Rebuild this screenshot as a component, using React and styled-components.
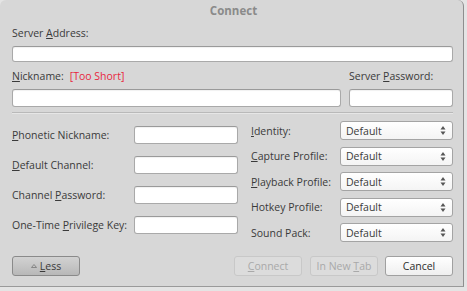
import React from 'react';
import styled, { createGlobalStyle } from 'styled-components';

const GlobalStyle = createGlobalStyle`
  body {
    margin: 0;
    background: #e4e4e4;
    font-family: "Open Sans", "DejaVu Sans", sans-serif;
  }
`;

const Window = styled.div`
  width: 463px;
  height: 286px;
  background: #d7d7d7;
  border-right: 1px solid #8e8e8e;
  border-bottom: 1px solid #9a9a9a;
  border-radius: 6px 6px 0 0;
  display: flex;
  flex-direction: column;
  color: #3a3a3a;
  font-size: 10.5px;
`;

const TitleBar = styled.div`
  height: 20px;
  display: flex;
  align-items: center;
  justify-content: center;
  font-weight: bold;
  font-size: 11.5px;
  color: #8a8a8a;
  padding-left: 4px;
`;

const Body = styled.div`
  flex: 1;
  padding: 6px 10px 0 12px;
  display: flex;
  flex-direction: column;
`;

const Label = styled.div`
  height: 14px;
  line-height: 14px;
  white-space: nowrap;
  color: ${p => (p.$error ? '#e8273f' : '#3a3a3a')};
  margin-left: ${p => p.$indent || 0}px;
`;

const Key = styled.u`
  text-decoration: underline;
  text-underline-offset: 1px;
`;

const TextInput = styled.div`
  box-sizing: border-box;
  height: ${p => p.$h || 18}px;
  width: ${p => (p.$w ? p.$w + 'px' : '100%')};
  flex: none;
  margin-top: ${p => p.$mt || 0}px;
  background: #fff;
  border: 1px solid #a9a9a9;
  border-top-color: #9a9a9a;
  border-radius: 3px;
  box-shadow: inset 0 1px 1px rgba(0, 0, 0, 0.06);
`;

const NickRow = styled.div`
  display: flex;
  margin-top: 7px;
`;

const NickCol = styled.div`
  display: flex;
  flex-direction: column;
  gap: 6px;
  flex: ${p => (p.$grow ? 1 : 'none')};
  width: ${p => (p.$w ? p.$w + 'px' : 'auto')};
  margin-left: ${p => p.$ml || 0}px;
`;

const LabelLine = styled.div`
  display: flex;
  height: 14px;
  line-height: 14px;
`;

const Separator = styled.div`
  height: 1px;
  background: #b9b9b9;
  border-bottom: 1px solid #e6e6e6;
  margin-top: 5px;
`;

const Columns = styled.div`
  display: flex;
  margin-top: 7px;
  height: 122px;
`;

const LeftCol = styled.div`
  width: 226px;
  display: flex;
  flex-direction: column;
  padding-top: 5px;
  gap: 12px;
`;

const RightCol = styled.div`
  flex: 1;
  margin-left: 13px;
  display: flex;
  flex-direction: column;
  gap: 6.5px;
`;

const FieldRow = styled.div`
  display: flex;
  align-items: center;
  height: ${p => p.$h}px;
`;

const FieldLabel = styled.div`
  width: ${p => p.$w}px;
  flex: none;
  white-space: nowrap;
`;

const Combo = styled.div`
  box-sizing: border-box;
  width: 113px;
  height: 19px;
  background: linear-gradient(#ffffff, #f4f4f4);
  border: 1px solid #a4a4a4;
  border-radius: 3px;
  display: flex;
  align-items: center;
  justify-content: space-between;
  padding: 0 6px 0 5px;
`;

const Arrows = styled.svg`
  width: 6px;
  height: 11px;
`;

const ButtonRow = styled.div`
  display: flex;
  align-items: center;
  margin-top: 13px;
  height: 20px;
`;

const Button = styled.div`
  box-sizing: border-box;
  width: 68px;
  height: 20px;
  border-radius: 3px;
  display: flex;
  align-items: center;
  justify-content: center;
  gap: 3px;
  margin-left: ${p => p.$ml || 0}px;
  ${p =>
    p.$variant === 'less' &&
    `
    background: linear-gradient(#d2d2d2, #b8b8b8);
    border: 1px solid #8a8a8a;
    color: #3a3a3a;
  `}
  ${p =>
    p.$variant === 'disabled' &&
    `
    background: #dcdcdc;
    border: 1px solid #c8c8c8;
    color: #a9a9a9;
  `}
  ${p =>
    p.$variant === 'normal' &&
    `
    background: linear-gradient(#ffffff, #efefef);
    border: 1px solid #a0a0a0;
    color: #2e2e2e;
  `}
`;

const Spacer = styled.div`
  flex: 1;
`;

const UpDown = () => (
  <Arrows viewBox="0 0 6 11">
    <path d="M3 1 L5.5 4.5 L0.5 4.5 Z" fill="#555" />
    <path d="M3 10 L5.5 6.5 L0.5 6.5 Z" fill="#555" />
  </Arrows>
);

const leftFields = [
  <><Key>P</Key>honetic Nickname:</>,
  <><Key>D</Key>efault Channel:</>,
  <>Channel <Key>P</Key>assword:</>,
  <>One-Time <Key>P</Key>rivilege Key:</>,
];

const rightFields = [
  <><Key>I</Key>dentity:</>,
  <><Key>C</Key>apture Profile:</>,
  <><Key>P</Key>layback Profile:</>,
  <>Hotkey Profile:</>,
  <>Sound Pack:</>,
];

export default function App() {
  return (
    <>
      <GlobalStyle />
      <Window>
        <TitleBar>Connect</TitleBar>
        <Body>
          <Label>Server <Key>A</Key>ddress:</Label>
          <TextInput $h={16} $mt={6} />
          <NickRow>
            <NickCol $grow>
              <LabelLine>
                <Label><Key>N</Key>ickname:</Label>
                <Label $error $indent={6}>[Too Short]</Label>
              </LabelLine>
              <TextInput />
            </NickCol>
            <NickCol $w={104} $ml={8}>
              <Label>Server <Key>P</Key>assword:</Label>
              <TextInput />
            </NickCol>
          </NickRow>
          <Separator />
          <Columns>
            <LeftCol>
              {leftFields.map((f, i) => (
                <FieldRow key={i} $h={18}>
                  <FieldLabel $w={122}>{f}</FieldLabel>
                  <TextInput $w={104} />
                </FieldRow>
              ))}
            </LeftCol>
            <RightCol>
              {rightFields.map((f, i) => (
                <FieldRow key={i} $h={19}>
                  <FieldLabel $w={89}>{f}</FieldLabel>
                  <Combo>
                    <span>Default</span>
                    <UpDown />
                  </Combo>
                </FieldRow>
              ))}
            </RightCol>
          </Columns>
          <ButtonRow>
            <Button $variant="less">
              <svg width="6" height="4" viewBox="0 0 6 4">
                <path d="M3 0.5 L5.5 3.5 L0.5 3.5 Z" fill="none" stroke="#777" strokeWidth="0.8" />
              </svg>
              <span><Key>L</Key>ess</span>
            </Button>
            <Spacer />
            <Button $variant="disabled"><span><Key>C</Key>onnect</span></Button>
            <Button $variant="disabled" $ml={8}><span>In New <Key>T</Key>ab</span></Button>
            <Button $variant="normal" $ml={7}>Cancel</Button>
          </ButtonRow>
        </Body>
      </Window>
    </>
  );
}
